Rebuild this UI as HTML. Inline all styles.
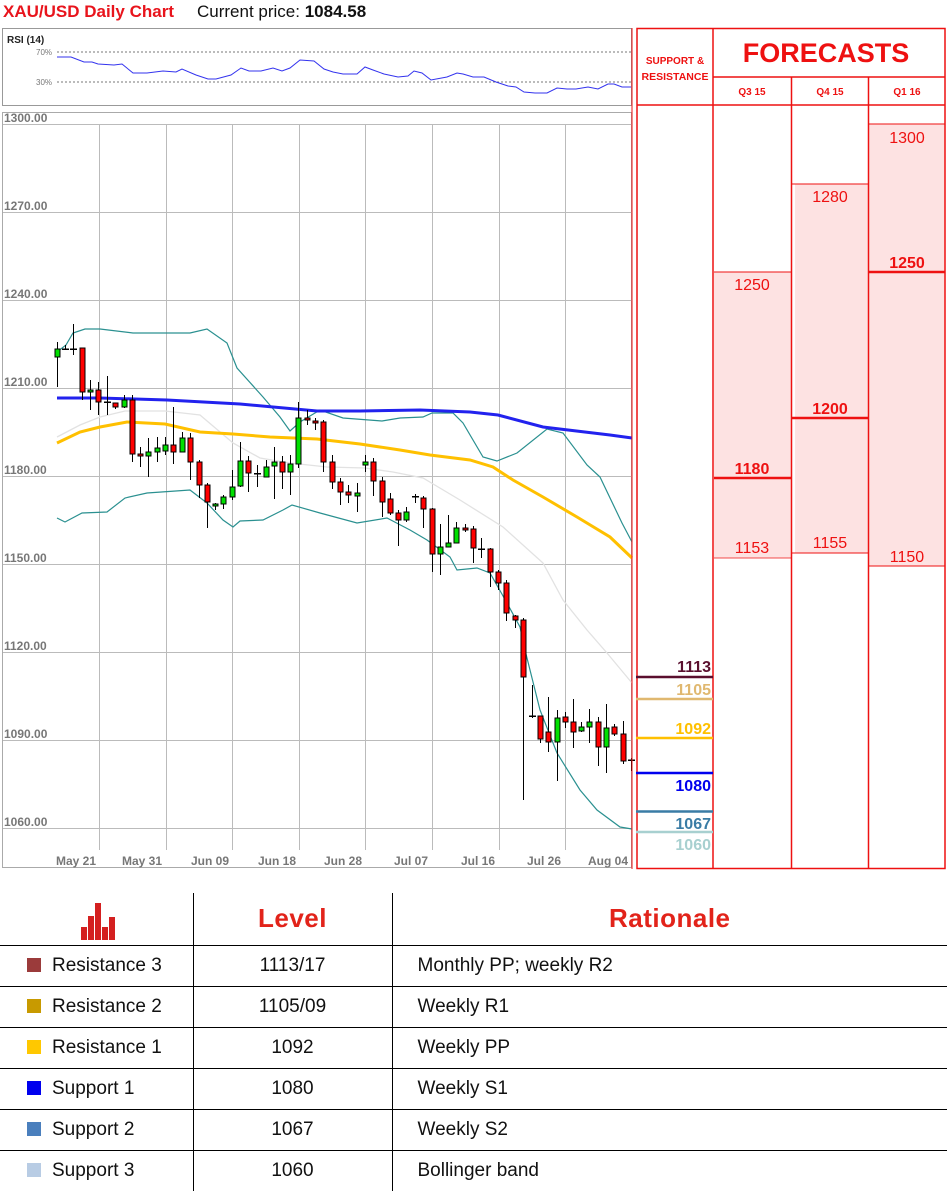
<!DOCTYPE html>
<html><head><meta charset="utf-8">
<style>
*{margin:0;padding:0;box-sizing:border-box}
body{width:950px;height:1191px;background:#fff;position:relative;overflow:hidden;font-family:"Liberation Sans",sans-serif}
.abs{position:absolute}
#t1{left:3px;top:2px;font-size:17px;font-weight:bold;color:#e8141c;white-space:nowrap}
#t2{left:197px;top:2px;font-size:17px;color:#111;white-space:nowrap}
table{position:absolute;left:0;top:893px;width:947px;border-collapse:collapse}
td{border-top:1px solid #000;border-bottom:1px solid #000;height:41px;font-size:19px;color:#111;vertical-align:middle}
td.c2{border-left:1.5px solid #000;border-right:1.5px solid #000;text-align:center}
tr.h td{border-top:none;height:52px}
.hd{font-size:26px;font-weight:900;color:#e2231a;font-family:"Liberation Sans",sans-serif;letter-spacing:0.5px}
.sq{display:inline-block;width:14px;height:14px;margin:0 11px 0 27px;vertical-align:-1px}
</style></head><body>
<div class="abs" id="t1">XAU/USD Daily Chart</div>
<div class="abs" id="t2">Current price: <b>1084.58</b></div>

<svg class="abs" style="left:0;top:0" width="950" height="872" viewBox="0 0 950 872">
<rect x="2.5" y="28.5" width="629" height="77" fill="#fff" stroke="#999"/>
<text x="7" y="43" font-size="10" font-weight="bold" fill="#222" font-family="Liberation Sans">RSI (14)</text>
<line x1="57" y1="52" x2="631" y2="52" stroke="#777" stroke-dasharray="2,2"/>
<line x1="57" y1="82" x2="631" y2="82" stroke="#777" stroke-dasharray="2,2"/>
<text x="36" y="55" font-size="8" fill="#777" font-family="Liberation Sans">70%</text>
<text x="36" y="85" font-size="8" fill="#777" font-family="Liberation Sans">30%</text>
<polyline fill="none" stroke="#3333ee" stroke-width="1" points="57,57 71,57 84,62 92,62 98,64 114,65 122,64 133,73 147,73 163,71 176,72 182,69 196,75 208,79 216,79 231,75 241,68 249,71 261,71 273,68 282,71 290,68 300,60 314,61 324,69 333,72 343,74 357,74 365,67 373,70 384,74 398,77 408,76 414,71 422,73 431,80 447,77 457,73 463,74 473,77 484,77 496,82 508,86 516,87 524,92 535,93 547,93 557,88 567,89 576,89 588,87 598,89 608,84 614,84 622,87 631,87"/>

<rect x="2.5" y="112.5" width="629" height="755" fill="#fff" stroke="#aaa"/>
<g stroke="#bbb" stroke-width="1">
<line x1="3" y1="124.5" x2="632" y2="124.5"/><line x1="3" y1="212.5" x2="632" y2="212.5"/><line x1="3" y1="300.5" x2="632" y2="300.5"/><line x1="3" y1="388.5" x2="632" y2="388.5"/><line x1="3" y1="476.5" x2="632" y2="476.5"/><line x1="3" y1="564.5" x2="632" y2="564.5"/><line x1="3" y1="652.5" x2="632" y2="652.5"/><line x1="3" y1="740.5" x2="632" y2="740.5"/><line x1="3" y1="828.5" x2="632" y2="828.5"/>
<line x1="99.5" y1="124" x2="99.5" y2="850"/><line x1="166.5" y1="124" x2="166.5" y2="850"/><line x1="232.5" y1="124" x2="232.5" y2="850"/><line x1="299.5" y1="124" x2="299.5" y2="850"/><line x1="365.5" y1="124" x2="365.5" y2="850"/><line x1="432.5" y1="124" x2="432.5" y2="850"/><line x1="499.5" y1="124" x2="499.5" y2="850"/><line x1="565.5" y1="124" x2="565.5" y2="850"/>
</g>
<g font-size="12" font-weight="bold" fill="#777" font-family="Liberation Sans">
<text x="4" y="122">1300.00</text><text x="4" y="210">1270.00</text><text x="4" y="298">1240.00</text><text x="4" y="386">1210.00</text><text x="4" y="474">1180.00</text><text x="4" y="562">1150.00</text><text x="4" y="650">1120.00</text><text x="4" y="738">1090.00</text><text x="4" y="826">1060.00</text>
</g>
<g font-size="12" font-weight="bold" fill="#777" font-family="Liberation Sans" text-anchor="end">
<text x="96" y="865">May 21</text><text x="162" y="865">May 31</text><text x="229" y="865">Jun 09</text><text x="296" y="865">Jun 18</text><text x="362" y="865">Jun 28</text><text x="428" y="865">Jul 07</text><text x="495" y="865">Jul 16</text><text x="561" y="865">Jul 26</text><text x="628" y="865">Aug 04</text>
</g>

<polyline fill="none" stroke="#e2e2e2" stroke-width="1.3" points="57,437 80,425 100,417 125,411 165,411 200,415 233,443 260,458 290,463 327,467 365,468 393,472 423,478 460,500 503,527 543,563 563,600 587,630 607,653 632,683"/>
<polyline fill="none" stroke="#2a9090" stroke-width="1.2" points="57,352 66,345 73,333 85,329 100,329 133,333 190,333 207,329 227,343 237,368 263,397 280,417 290,431 300,422 320,410 343,418 382,421 400,418 423,417 432,413 453,413 463,423 483,457 497,461 517,453 547,429 563,433 587,465 600,477 622,523 632,542"/>
<polyline fill="none" stroke="#2a9090" stroke-width="1.2" points="57,518 65,522 82,513 107,512 125,498 147,493 190,490 207,503 223,520 233,527 240,521 263,520 283,510 292,505 320,513 357,523 387,518 410,530 427,540 450,557 457,570 477,568 490,573 507,603 520,627 525,650 540,710 557,753 580,790 597,810 620,827 632,829"/>
<polyline fill="none" stroke="#ffc000" stroke-width="3" points="57,443 80,432 100,427 127,422 165,424 200,432 233,434 270,437 317,439 360,444 400,450 430,455 470,460 493,467 513,480 543,497 577,517 610,537 632,558"/>
<polyline fill="none" stroke="#2222ee" stroke-width="3" points="57,398 100,398 167,400 240,404 317,411 360,411 420,410 470,412 498,415 543,427 610,435 632,438"/>

<path stroke="#000" stroke-width="1" fill="none" d="M57.5 342V387M65.5 345V350M73.5 324V355M82.5 348V400M90.5 380V410M98.5 382V415M107.5 376V415M115.5 403V409M124.5 395V408M132.5 395V462M140.5 447V467M148.5 438V477M157.5 437V462M165.5 437V455M173.5 407V464M182.5 432V452M190.5 433V480M199.5 460V498M207.5 483V528M215.5 503V510M223.5 495V509M232.5 470V500M240.5 442V487M248.5 456V492M257.5 465V487M266.5 460V477M274.5 447V499M282.5 456V489M290.5 455V495M298.5 402V468M307.5 410V425M315.5 418V430M323.5 420V472M332.5 455V489M340.5 478V505M348.5 485V503M357.5 483V512M365.5 455V472M373.5 458V496M382.5 477V517M390.5 493V515M398.5 510V546M406.5 507V522M415.5 494V503M423.5 496V528M432.5 508V572M440.5 524V575M448.5 515V547M456.5 522V543M465.5 524V532M473.5 526V563M481.5 538V558M490.5 548V587M498.5 570V590M506.5 580V621M515.5 615V628M523.5 618V800M532.5 685V718M540.5 716V743M548.5 697V752M557.5 710V781M565.5 712V728M573.5 699V748M581.5 722V732M589.5 709V743M598.5 717V766M606.5 704V773M614.5 724V736M623.5 721V764M631.5 758V771"/>
<g fill="#ff0000" stroke="#000" stroke-width="1">
<rect x="80" y="348" width="5" height="44"/><rect x="96" y="390" width="5" height="12"/><rect x="113" y="403" width="5" height="4"/><rect x="130" y="400" width="5" height="54"/><rect x="138" y="454" width="5" height="2"/><rect x="171" y="445" width="5" height="7"/><rect x="188" y="438" width="5" height="24"/><rect x="197" y="462" width="5" height="23"/><rect x="205" y="485" width="5" height="17"/><rect x="246" y="461" width="5" height="12"/><rect x="280" y="462" width="5" height="10"/><rect x="305" y="418" width="5" height="2"/><rect x="313" y="421" width="5" height="2"/><rect x="321" y="422" width="5" height="40"/><rect x="330" y="462" width="5" height="20"/><rect x="338" y="482" width="5" height="10"/><rect x="346" y="492" width="5" height="3"/><rect x="371" y="462" width="5" height="19"/><rect x="380" y="481" width="5" height="21"/><rect x="388" y="499" width="5" height="14"/><rect x="396" y="513" width="5" height="7"/><rect x="421" y="498" width="5" height="11"/><rect x="430" y="509" width="5" height="45"/><rect x="463" y="528" width="5" height="2"/><rect x="471" y="529" width="5" height="19"/><rect x="488" y="549" width="5" height="23"/><rect x="496" y="572" width="5" height="11"/><rect x="504" y="583" width="5" height="30"/><rect x="513" y="616" width="5" height="4"/><rect x="521" y="620" width="5" height="57"/><rect x="538" y="716" width="5" height="23"/><rect x="546" y="732" width="5" height="10"/><rect x="563" y="717" width="5" height="5"/><rect x="571" y="722" width="5" height="10"/><rect x="596" y="722" width="5" height="25"/><rect x="612" y="727" width="5" height="7"/><rect x="621" y="734" width="5" height="27"/>
</g>
<g fill="#00e000" stroke="#000" stroke-width="1">
<rect x="55" y="349" width="5" height="8"/><rect x="88" y="390" width="5" height="2"/><rect x="122" y="400" width="5" height="7"/><rect x="146" y="452" width="5" height="4"/><rect x="155" y="448" width="5" height="4"/><rect x="163" y="445" width="5" height="6"/><rect x="180" y="438" width="5" height="14"/><rect x="213" y="504" width="5" height="2"/><rect x="221" y="497" width="5" height="7"/><rect x="230" y="487" width="5" height="10"/><rect x="238" y="461" width="5" height="25"/><rect x="264" y="467" width="5" height="10"/><rect x="272" y="462" width="5" height="4"/><rect x="288" y="464" width="5" height="8"/><rect x="296" y="418" width="5" height="46"/><rect x="355" y="493" width="5" height="3"/><rect x="363" y="462" width="5" height="3"/><rect x="404" y="512" width="5" height="8"/><rect x="438" y="547" width="5" height="7"/><rect x="446" y="543" width="5" height="4"/><rect x="454" y="528" width="5" height="15"/><rect x="555" y="718" width="5" height="24"/><rect x="579" y="727" width="5" height="4"/><rect x="587" y="722" width="5" height="5"/><rect x="604" y="728" width="5" height="19"/>
</g>
<g fill="#000">
<rect x="62" y="348.5" width="7" height="1.5"/><rect x="70" y="348.5" width="7" height="1.5"/><rect x="104" y="401.5" width="7" height="1.5"/><rect x="254" y="473" width="7" height="1.5"/><rect x="412" y="496" width="7" height="1.5"/><rect x="478" y="548.5" width="7" height="1.5"/><rect x="529" y="715.5" width="7" height="1.5"/><rect x="628" y="759.5" width="7" height="1.5"/>
</g>

<rect x="795" y="184" width="73" height="369" fill="#fde2e2"/>
<rect x="714" y="272" width="78" height="286" fill="#fde2e2"/>
<rect x="869" y="124" width="76" height="442" fill="#fde2e2"/>
<g stroke="#ee1111" fill="none">
<rect x="637" y="28.5" width="308" height="840" stroke-width="1.5"/>
<line x1="713" y1="28" x2="713" y2="869" stroke-width="1.5"/>
<line x1="791.5" y1="77" x2="791.5" y2="869" stroke-width="1.5"/>
<line x1="868.5" y1="77" x2="868.5" y2="869" stroke-width="1.5"/>
<line x1="713" y1="77" x2="945" y2="77" stroke-width="1.5"/>
<line x1="637" y1="105" x2="945" y2="105" stroke-width="1.5"/>
<line x1="714" y1="272" x2="791" y2="272" stroke-width="1"/>
<line x1="714" y1="558" x2="791" y2="558" stroke-width="0.7"/>
<line x1="714" y1="478" x2="791" y2="478" stroke-width="2.5"/>
<line x1="792" y1="184" x2="868" y2="184" stroke-width="1"/>
<line x1="792" y1="553" x2="868" y2="553" stroke-width="1"/>
<line x1="792" y1="418" x2="868" y2="418" stroke-width="2.5"/>
<line x1="869" y1="124" x2="945" y2="124" stroke-width="1"/>
<line x1="869" y1="566" x2="945" y2="566" stroke-width="1"/>
<line x1="869" y1="272" x2="945" y2="272" stroke-width="2.5"/>
</g>
<line x1="632" y1="28" x2="632" y2="869" stroke="#ee1111" stroke-width="1"/>
<g font-family="Liberation Sans" fill="#ee1111" text-anchor="middle">
<text x="675" y="64" font-size="10" font-weight="bold">SUPPORT &amp;</text>
<text x="675" y="80" font-size="10.5" font-weight="bold">RESISTANCE</text>
<text x="826" y="62" font-size="27" font-weight="bold">FORECASTS</text>
<text x="752" y="95" font-size="10" font-weight="bold">Q3 15</text>
<text x="830" y="95" font-size="10" font-weight="bold">Q4 15</text>
<text x="907" y="95" font-size="10" font-weight="bold">Q1 16</text>
<g font-size="16">
<text x="752" y="290">1250</text><text x="752" y="553">1153</text>
<text x="830" y="202">1280</text><text x="830" y="548">1155</text>
<text x="907" y="143">1300</text><text x="907" y="562">1150</text>
<text x="752" y="474" font-weight="bold">1180</text>
<text x="830" y="414" font-weight="bold">1200</text>
<text x="907" y="268" font-weight="bold">1250</text>
</g>
</g>
<g stroke-width="2.5">
<line x1="636" y1="677" x2="713" y2="677" stroke="#5a0f2e"/>
<line x1="636" y1="699" x2="713" y2="699" stroke="#e0b870"/>
<line x1="636" y1="738" x2="713" y2="738" stroke="#ffc000"/>
<line x1="636" y1="773" x2="713" y2="773" stroke="#0000ee"/>
<line x1="636" y1="811.5" x2="713" y2="811.5" stroke="#3a7ca5"/>
<line x1="636" y1="832" x2="713" y2="832" stroke="#a8d0d0"/>
</g>
<g font-family="Liberation Sans" font-size="16" font-weight="bold" text-anchor="end">
<text x="711" y="672" fill="#5a0f2e">1113</text>
<text x="711" y="695" fill="#e0b870">1105</text>
<text x="711" y="734" fill="#ffc000">1092</text>
<text x="711" y="791" fill="#0000ee">1080</text>
<text x="711" y="829" fill="#3a7ca5">1067</text>
<text x="711" y="850" fill="#a8d0d0">1060</text>
</g>
</svg>

<table>
<tr class="h">
<td style="width:193px;text-align:center"><svg width="36" height="37" viewBox="0 0 36 37" style="vertical-align:middle;margin-top:6px;margin-left:6px"><g fill="#d42020"><rect x="0" y="24" width="6" height="13"/><rect x="7" y="13" width="6" height="24"/><rect x="14" y="0" width="6" height="37"/><rect x="21" y="24" width="6" height="13"/><rect x="28" y="14" width="6" height="23"/></g></svg></td>
<td class="c2" style="width:199px"><span class="hd">Level</span></td>
<td style="text-align:center"><span class="hd">Rationale</span></td>
</tr>
<tr><td><span class="sq" style="background:#9b3b3b"></span>Resistance 3</td><td class="c2">1113/17</td><td style="padding-left:25px">Monthly PP; weekly R2</td></tr>
<tr><td><span class="sq" style="background:#c89a00"></span>Resistance 2</td><td class="c2">1105/09</td><td style="padding-left:25px">Weekly R1</td></tr>
<tr><td><span class="sq" style="background:#ffc800"></span>Resistance 1</td><td class="c2">1092</td><td style="padding-left:25px">Weekly PP</td></tr>
<tr><td><span class="sq" style="background:#0000ee"></span>Support 1</td><td class="c2">1080</td><td style="padding-left:25px">Weekly S1</td></tr>
<tr><td><span class="sq" style="background:#4a7fbd"></span>Support 2</td><td class="c2">1067</td><td style="padding-left:25px">Weekly S2</td></tr>
<tr><td style="border-bottom:none"><span class="sq" style="background:#b8cce4"></span>Support 3</td><td class="c2" style="border-bottom:none">1060</td><td style="padding-left:25px;border-bottom:none">Bollinger band</td></tr>
</table>
</body></html>
